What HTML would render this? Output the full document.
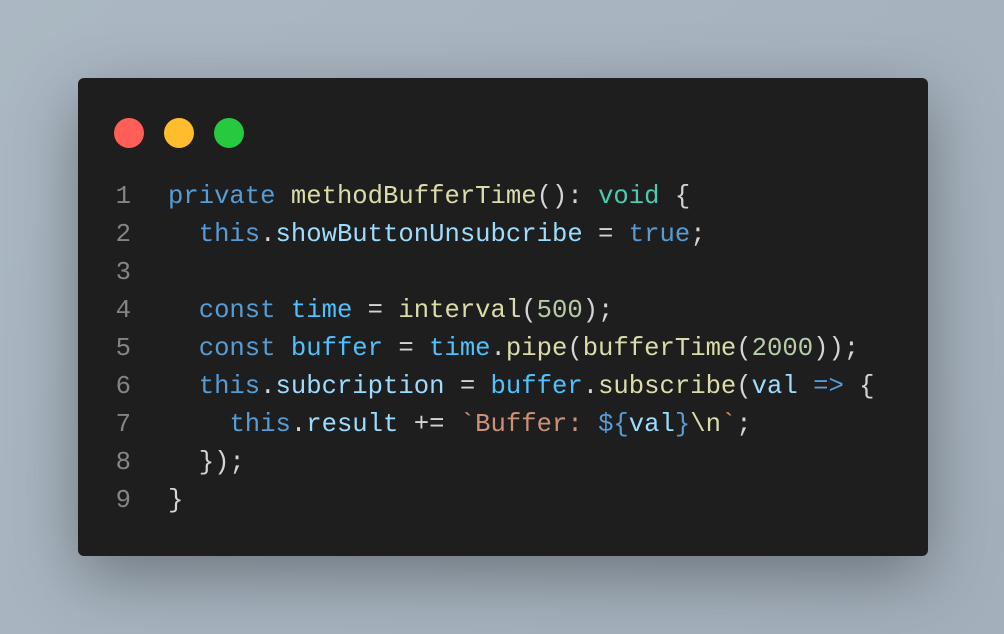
<!DOCTYPE html>
<html><head><meta charset="utf-8"><style>
html,body{margin:0;padding:0}
body{width:1004px;height:634px;overflow:hidden;background:linear-gradient(135deg,#abb8c3 0%,#a3afbb 100%);position:relative}
.win{position:absolute;left:78px;top:78px;width:850px;height:478px;background:#1e1e1e;border-radius:6px;box-shadow:0 20px 68px rgba(0,0,0,0.35)}
.dot{position:absolute;top:40px;width:30px;height:30px;border-radius:50%}
pre{position:absolute;left:0;top:100px;margin:0;font-family:"Liberation Mono",monospace;font-size:25.6px;line-height:38px;color:#d4d4d4}
.ln{display:inline-block;width:53px;text-align:right;color:#858585;margin-right:37px}
.k{color:#569cd6}.f{color:#dcdcaa}.v{color:#9cdcfe}.c{color:#4fc1ff}.n{color:#b5cea8}.s{color:#ce9178}.t{color:#4ec9b0}
</style></head><body>
<div class="win">
<div class="dot" style="left:36px;background:#ff5f56"></div>
<div class="dot" style="left:86px;background:#ffbd2e"></div>
<div class="dot" style="left:136px;background:#27c93f"></div>
<pre><span class="ln">1</span><span class="k">private</span> <span class="f">methodBufferTime</span>(): <span class="t">void</span> {
<span class="ln">2</span>  <span class="k">this</span>.<span class="v">showButtonUnsubcribe</span> = <span class="k">true</span>;
<span class="ln">3</span>
<span class="ln">4</span>  <span class="k">const</span> <span class="c">time</span> = <span class="f">interval</span>(<span class="n">500</span>);
<span class="ln">5</span>  <span class="k">const</span> <span class="c">buffer</span> = <span class="c">time</span>.<span class="f">pipe</span>(<span class="f">bufferTime</span>(<span class="n">2000</span>));
<span class="ln">6</span>  <span class="k">this</span>.<span class="v">subcription</span> = <span class="c">buffer</span>.<span class="f">subscribe</span>(<span class="v">val</span> <span class="k">=&gt;</span> {
<span class="ln">7</span>    <span class="k">this</span>.<span class="v">result</span> += <span class="s">`Buffer: </span><span class="k">${</span><span class="v">val</span><span class="k">}</span><span class="f">\n</span><span class="s">`</span>;
<span class="ln">8</span>  });
<span class="ln">9</span>}</pre>
</div>
</body></html>
